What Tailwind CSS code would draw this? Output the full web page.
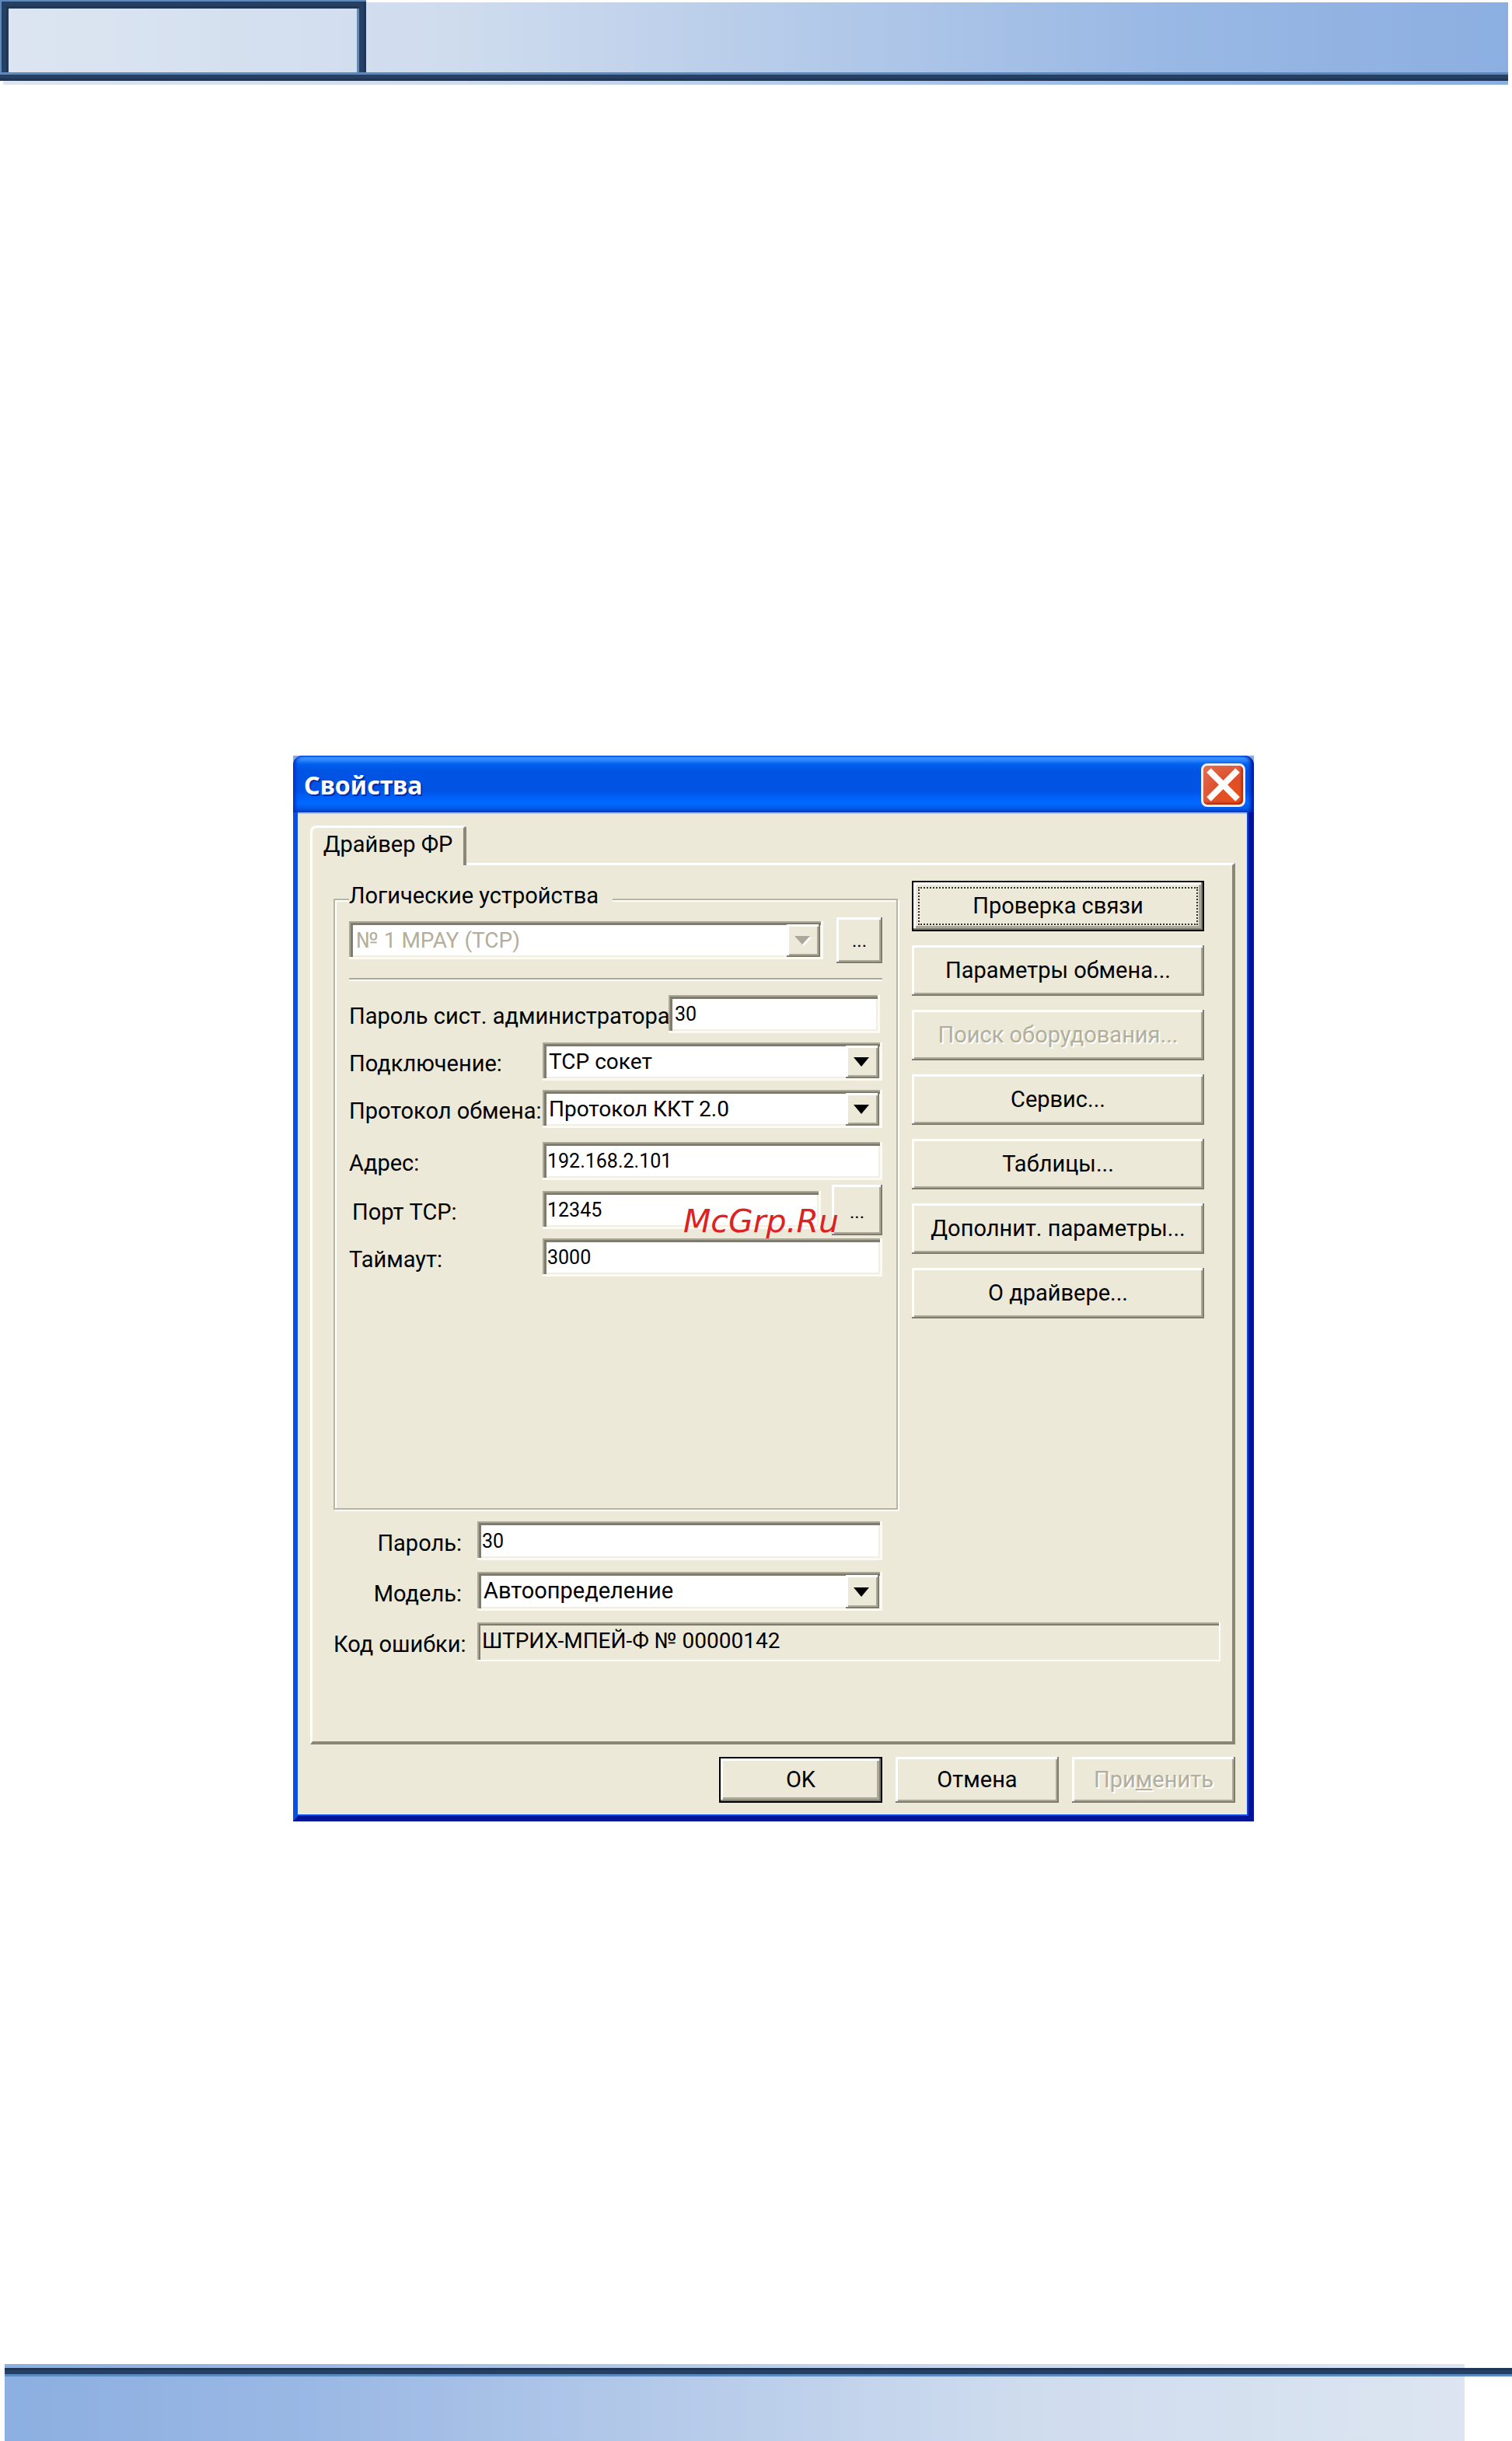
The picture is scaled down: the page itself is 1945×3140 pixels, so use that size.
<!DOCTYPE html>
<html lang="ru">
<head>
  <meta charset="UTF-8">
  <meta name="viewport" content="width=device-width, initial-scale=1">
  <title>Свойства - Драйвер ФР</title>
  <script src="https://cdn.jsdelivr.net/npm/@tailwindcss/browser@4"></script>
</head>
<body class="bg-white text-black min-h-screen flex flex-col font-['Roboto',sans-serif]">

  <!-- верхний колонтитул -->
  <header class="mr-[5px] bg-[linear-gradient(90deg,#dce5f1,#cfdcee_30%,#99b8e4_77%,#8cafe1)]">
    <div class="flex">
      <div class="w-[471px] h-[93px] shadow-[inset_2px_2px_0_#5b8ac0,inset_-3px_0_0_#1f3657,inset_8px_8px_0_#254063,inset_-9px_0_0_#254063,inset_11px_11px_0_#1f3657,inset_-12px_0_0_#5b8ac0]"></div>
      <div class="flex-1 border-t-[3px] border-white"></div>
    </div>
    <div class="h-[11px] border-y-[3px] border-t-[#5b8ac0] border-b-[#1f3657] bg-[#254063]"></div>
    <div class="h-[5px] border-l-4 border-white"></div>
  </header>

  <main class="flex-1 pt-[863px] pl-[45px] pb-20">
    <div role="dialog" aria-labelledby="title" class="w-full max-w-[1236px] mx-auto bg-[#8fa9dc]">

      <!-- заголовок окна -->
      <div class="flex items-center justify-between h-[73px] pl-[14px] pr-[11px] pt-[3px] rounded-t-xl bg-[linear-gradient(180deg,#0055e5_0px,#3a93ff_3px,#2a86fb_6px,#0060ee_11px,#0054e3_20px,#0053e4_45px,#0062fb_55px,#0069ff_62px,#0058e8_68px,#003bc4_73px)] shadow-[inset_-6px_0_4px_-2px_#0018a0,inset_6px_0_4px_-3px_#0030c8]">
        <h1 id="title" class="text-[32px] leading-9 font-bold text-white font-['Noto_Sans',sans-serif] [text-shadow:2px_2px_0_#0a2a9a]">Свойства</h1>
        <button type="button" aria-label="Закрыть" class="w-[57px] h-14 rounded-lg border-[3px] border-[#f4ece8] bg-[radial-gradient(circle_at_75%_80%,#e8501a,#dd4f2a_45%,#e0705a)] shadow-[inset_-2px_-2px_3px_#a82a08]">
          <svg viewBox="0 0 51 50" class="w-full h-full" fill="none" stroke="#fff" stroke-width="8">
            <path d="M7 6 L44 43 M44 6 L7 43"/>
          </svg>
        </button>
      </div>

      <div class="bg-[#ece9d8] border-l-[6px] border-r-[7px] border-b-[7px] border-l-[#0a50e0] border-r-[#00149a] border-b-[#00149a] shadow-[inset_0_-2px_0_#0a4ae0,inset_-2px_0_0_#0a4ae0,inset_0_2px_0_#b8c0d8] pl-4 pr-[17px] pt-[17px] pb-[17px]">

        <div role="tablist" class="flex">
          <button type="button" role="tab" aria-selected="true" class="relative z-10 -mb-[3px] w-[201px] h-[51px] pb-1 rounded-tl-lg rounded-tr text-[29px] bg-[#ece9d8] border-t-[3px] border-l-[3px] border-r-4 border-t-white border-l-white border-r-[#8a8778]">Драйвер ФР</button>
        </div>

        <div role="tabpanel" class="border-[3px] border-r-4 border-b-4 border-t-white border-l-white border-r-[#8a8778] border-b-[#8a8778] pl-[27px] pr-[15px] pb-[103px]">
          <div class="flex gap-[18px] pr-[21px]">

            <fieldset class="relative flex-1 min-w-0 mt-[43px] px-[18px] pt-[22px] pb-[298px] border-2 border-[#b9b5a2] shadow-[2px_2px_0_#fff,inset_2px_2px_0_#fff]">
              <legend class="absolute -top-6 left-[18px] pr-[18px] text-[29px] leading-9 bg-[#ece9d8]">Логические устройства</legend>

              <div class="flex items-center gap-[17px]">
                <div class="relative flex-1">
                  <select disabled aria-label="Логическое устройство" class="appearance-none opacity-100 w-full h-[49px] pl-[9px] text-[28px] text-[#b3af9c] bg-white shadow-[inset_-3px_-3px_0_#fbfaf4,inset_2px_2px_0_#aca899,inset_5px_5px_0_#7f7c6d,inset_-5px_-5px_0_#f1efe2]">
                    <option>№ 1 MPAY (TCP)</option>
                  </select>
                  <span class="absolute right-1 top-1 flex items-center justify-center w-[43px] h-[42px] pr-[2px] pointer-events-none bg-[#ece9d8] shadow-[inset_-2px_-2px_0_#7f7c6d,inset_3px_3px_0_#fff,inset_-4px_-4px_0_#aca899]">
                    <svg width="22" height="14" viewBox="0 0 22 14"><path d="M3 3h19L12 14z" fill="#fff"/><path d="M0 1h20L10 12z" fill="#aca899"/></svg>
                  </span>
                </div>
                <button type="button" class="w-[59px] h-[59px] text-2xl bg-[#ece9d8] shadow-[inset_-2px_-2px_0_#7f7c6d,inset_3px_3px_0_#fff,inset_-4px_-4px_0_#aca899]">...</button>
              </div>

              <hr class="mt-[19px] h-1 border-t-2 border-b-2 border-t-[#aca899] border-b-white">

              <div class="flex items-center mt-[18px] mr-[3px]">
                <label for="admin" class="w-[411px] pt-1 text-[29px] leading-9 whitespace-nowrap">Пароль сист. администратора</label>
                <input id="admin" type="text" value="30" class="flex-1 min-w-0 h-[49px] pl-2 text-[25px] bg-white shadow-[inset_-3px_-3px_0_#fbfaf4,inset_2px_2px_0_#aca899,inset_5px_5px_0_#7f7c6d,inset_-5px_-5px_0_#f1efe2]">
              </div>

              <div class="flex items-center mt-3">
                <label for="conn" class="w-[249px] pt-1 text-[29px] leading-9 whitespace-nowrap">Подключение:</label>
                <div class="relative flex-1">
                  <select id="conn" class="appearance-none w-full h-[49px] pl-2 text-[28px] bg-white shadow-[inset_-3px_-3px_0_#fbfaf4,inset_2px_2px_0_#aca899,inset_5px_5px_0_#7f7c6d,inset_-5px_-5px_0_#f1efe2]">
                    <option>TCP сокет</option>
                  </select>
                  <span class="absolute right-1 top-1 flex items-center justify-center w-[43px] h-[42px] pr-[3px] pointer-events-none bg-[#ece9d8] shadow-[inset_-2px_-2px_0_#7f7c6d,inset_3px_3px_0_#fff,inset_-4px_-4px_0_#aca899]">
                    <svg width="20" height="12" viewBox="0 0 20 12"><path d="M0 0h20L10 12z" fill="#000"/></svg>
                  </span>
                </div>
              </div>

              <div class="flex items-center mt-3">
                <label for="proto" class="w-[249px] pt-1 text-[29px] leading-9 whitespace-nowrap">Протокол обмена:</label>
                <div class="relative flex-1">
                  <select id="proto" class="appearance-none w-full h-[49px] pl-2 text-[28px] bg-white shadow-[inset_-3px_-3px_0_#fbfaf4,inset_2px_2px_0_#aca899,inset_5px_5px_0_#7f7c6d,inset_-5px_-5px_0_#f1efe2]">
                    <option>Протокол ККТ 2.0</option>
                  </select>
                  <span class="absolute right-1 top-1 flex items-center justify-center w-[43px] h-[42px] pr-[3px] pointer-events-none bg-[#ece9d8] shadow-[inset_-2px_-2px_0_#7f7c6d,inset_3px_3px_0_#fff,inset_-4px_-4px_0_#aca899]">
                    <svg width="20" height="12" viewBox="0 0 20 12"><path d="M0 0h20L10 12z" fill="#000"/></svg>
                  </span>
                </div>
              </div>

              <div class="flex items-center mt-[18px]">
                <label for="addr" class="w-[249px] pt-1 text-[29px] leading-9">Адрес:</label>
                <input id="addr" type="text" value="192.168.2.101" class="flex-1 min-w-0 h-[49px] pl-[6px] text-[25px] bg-white shadow-[inset_-3px_-3px_0_#fbfaf4,inset_2px_2px_0_#aca899,inset_5px_5px_0_#7f7c6d,inset_-5px_-5px_0_#f1efe2]">
              </div>

              <div class="relative flex items-center mt-[6px]">
                <label for="port" class="w-[249px] pl-1 pt-1 text-[29px] leading-9">Порт TCP:</label>
                <input id="port" type="text" value="12345" class="flex-1 min-w-0 h-[49px] pl-[6px] text-[25px] bg-white shadow-[inset_-3px_-3px_0_#fbfaf4,inset_2px_2px_0_#aca899,inset_5px_5px_0_#7f7c6d,inset_-5px_-5px_0_#f1efe2]">
                <button type="button" class="ml-[14px] w-[65px] h-[65px] pt-1 text-2xl bg-[#ece9d8] shadow-[inset_-2px_-2px_0_#7f7c6d,inset_3px_3px_0_#fff,inset_-4px_-4px_0_#aca899]">...</button>
                <!-- водяной знак -->
                <span class="absolute left-[430px] top-[27px] z-10 text-[41px] leading-10 italic text-[#dd2222] font-['DejaVu_Sans',sans-serif] pointer-events-none">McGrp.Ru</span>
              </div>

              <div class="flex items-center mt-1">
                <label for="timeout" class="w-[249px] pt-1 text-[29px] leading-9">Таймаут:</label>
                <input id="timeout" type="text" value="3000" class="flex-1 min-w-0 h-[49px] pl-[6px] text-[25px] bg-white shadow-[inset_-3px_-3px_0_#fbfaf4,inset_2px_2px_0_#aca899,inset_5px_5px_0_#7f7c6d,inset_-5px_-5px_0_#f1efe2]">
              </div>
            </fieldset>

            <div class="flex flex-col gap-[18px] w-[376px] pt-5 text-[29px]">
              <button type="button" class="h-[65px] p-[6px] bg-[#ece9d8] border-2 border-black shadow-[inset_-2px_-2px_0_#7f7c6d,inset_3px_3px_0_#fff,inset_-5px_-5px_0_#aca899]">
                <span class="flex items-center justify-center h-full border-2 border-dotted border-[#333]">Проверка связи</span>
              </button>
              <button type="button" class="h-[65px] bg-[#ece9d8] shadow-[inset_-2px_-2px_0_#7f7c6d,inset_3px_3px_0_#fff,inset_-4px_-4px_0_#aca899]">Параметры обмена...</button>
              <button type="button" disabled class="h-[65px] text-[#b3af9c] [text-shadow:2px_2px_0_#fff] bg-[#ece9d8] shadow-[inset_-2px_-2px_0_#7f7c6d,inset_3px_3px_0_#fff,inset_-4px_-4px_0_#aca899]">Поиск оборудования...</button>
              <button type="button" class="h-[65px] bg-[#ece9d8] shadow-[inset_-2px_-2px_0_#7f7c6d,inset_3px_3px_0_#fff,inset_-4px_-4px_0_#aca899]">Сервис...</button>
              <button type="button" class="h-[65px] bg-[#ece9d8] shadow-[inset_-2px_-2px_0_#7f7c6d,inset_3px_3px_0_#fff,inset_-4px_-4px_0_#aca899]">Таблицы...</button>
              <button type="button" class="h-[65px] bg-[#ece9d8] shadow-[inset_-2px_-2px_0_#7f7c6d,inset_3px_3px_0_#fff,inset_-4px_-4px_0_#aca899]">Дополнит. параметры...</button>
              <button type="button" class="h-[65px] bg-[#ece9d8] shadow-[inset_-2px_-2px_0_#7f7c6d,inset_3px_3px_0_#fff,inset_-4px_-4px_0_#aca899]">О драйвере...</button>
            </div>
          </div>

          <div class="flex flex-col gap-[15px] mt-[15px]">
            <div class="flex items-center">
              <label for="pass" class="w-[185px] pr-5 pt-[6px] text-right text-[29px] leading-9">Пароль:</label>
              <input id="pass" type="text" value="30" class="w-[521px] h-[50px] pl-[6px] text-[25px] bg-white shadow-[inset_-3px_-3px_0_#fbfaf4,inset_2px_2px_0_#aca899,inset_5px_5px_0_#7f7c6d,inset_-5px_-5px_0_#f1efe2]">
            </div>
            <div class="flex items-center">
              <label for="model" class="w-[185px] pr-5 pt-[6px] text-right text-[29px] leading-9">Модель:</label>
              <div class="relative w-[521px]">
                <select id="model" class="appearance-none w-full h-[50px] pl-2 text-[29px] bg-white shadow-[inset_-3px_-3px_0_#fbfaf4,inset_2px_2px_0_#aca899,inset_5px_5px_0_#7f7c6d,inset_-5px_-5px_0_#f1efe2]">
                  <option>Автоопределение</option>
                </select>
                <span class="absolute right-1 top-1 flex items-center justify-center w-[43px] h-[43px] pr-[3px] pointer-events-none bg-[#ece9d8] shadow-[inset_-2px_-2px_0_#7f7c6d,inset_3px_3px_0_#fff,inset_-4px_-4px_0_#aca899]">
                  <svg width="20" height="12" viewBox="0 0 20 12"><path d="M0 0h20L10 12z" fill="#000"/></svg>
                </span>
              </div>
            </div>
            <div class="flex items-center">
              <label for="code" class="w-[185px] pr-5 pt-[6px] text-right text-[29px] leading-9 whitespace-nowrap">Код ошибки:</label>
              <input id="code" type="text" readonly value="ШТРИХ-МПЕЙ-Ф № 00000142" class="flex-1 min-w-0 h-[50px] pl-[6px] pb-1 text-[28px] bg-[#ece9d8] shadow-[inset_-2px_-2px_0_#fff,inset_2px_2px_0_#aca899,inset_4px_4px_0_#7f7c6d]">
            </div>
          </div>
        </div>

        <div class="flex justify-end gap-[17px] mt-4 text-[29px]">
          <button type="button" class="w-[210px] h-[59px] bg-[#ece9d8] border-2 border-black shadow-[inset_-2px_-2px_0_#7f7c6d,inset_3px_3px_0_#fff,inset_-5px_-5px_0_#aca899]">OK</button>
          <button type="button" class="w-[210px] h-[59px] bg-[#ece9d8] shadow-[inset_-2px_-2px_0_#7f7c6d,inset_3px_3px_0_#fff,inset_-4px_-4px_0_#aca899]">Отмена</button>
          <button type="button" disabled class="w-[210px] h-[59px] text-[#b3af9c] [text-shadow:2px_2px_0_#fff] bg-[#ece9d8] shadow-[inset_-2px_-2px_0_#7f7c6d,inset_3px_3px_0_#fff,inset_-4px_-4px_0_#aca899]">При<u>м</u>енить</button>
        </div>
      </div>
    </div>
  </main>

  <!-- нижний колонтитул -->
  <footer class="ml-[6px]">
    <div class="mr-[61px] h-[5px] bg-[linear-gradient(90deg,#8cafe1,#9ab8e4_21%,#cfdcee_70%,#dce5f1)]"></div>
    <div class="h-[11px] border-y-[3px] border-t-[#1f3657] border-b-[#5b8ac0] bg-[#254063]"></div>
    <div class="mr-[61px] h-[83px] bg-[linear-gradient(90deg,#8cafe1,#9ab8e4_21%,#cfdcee_70%,#dce5f1)]"></div>
  </footer>

</body>
</html>
